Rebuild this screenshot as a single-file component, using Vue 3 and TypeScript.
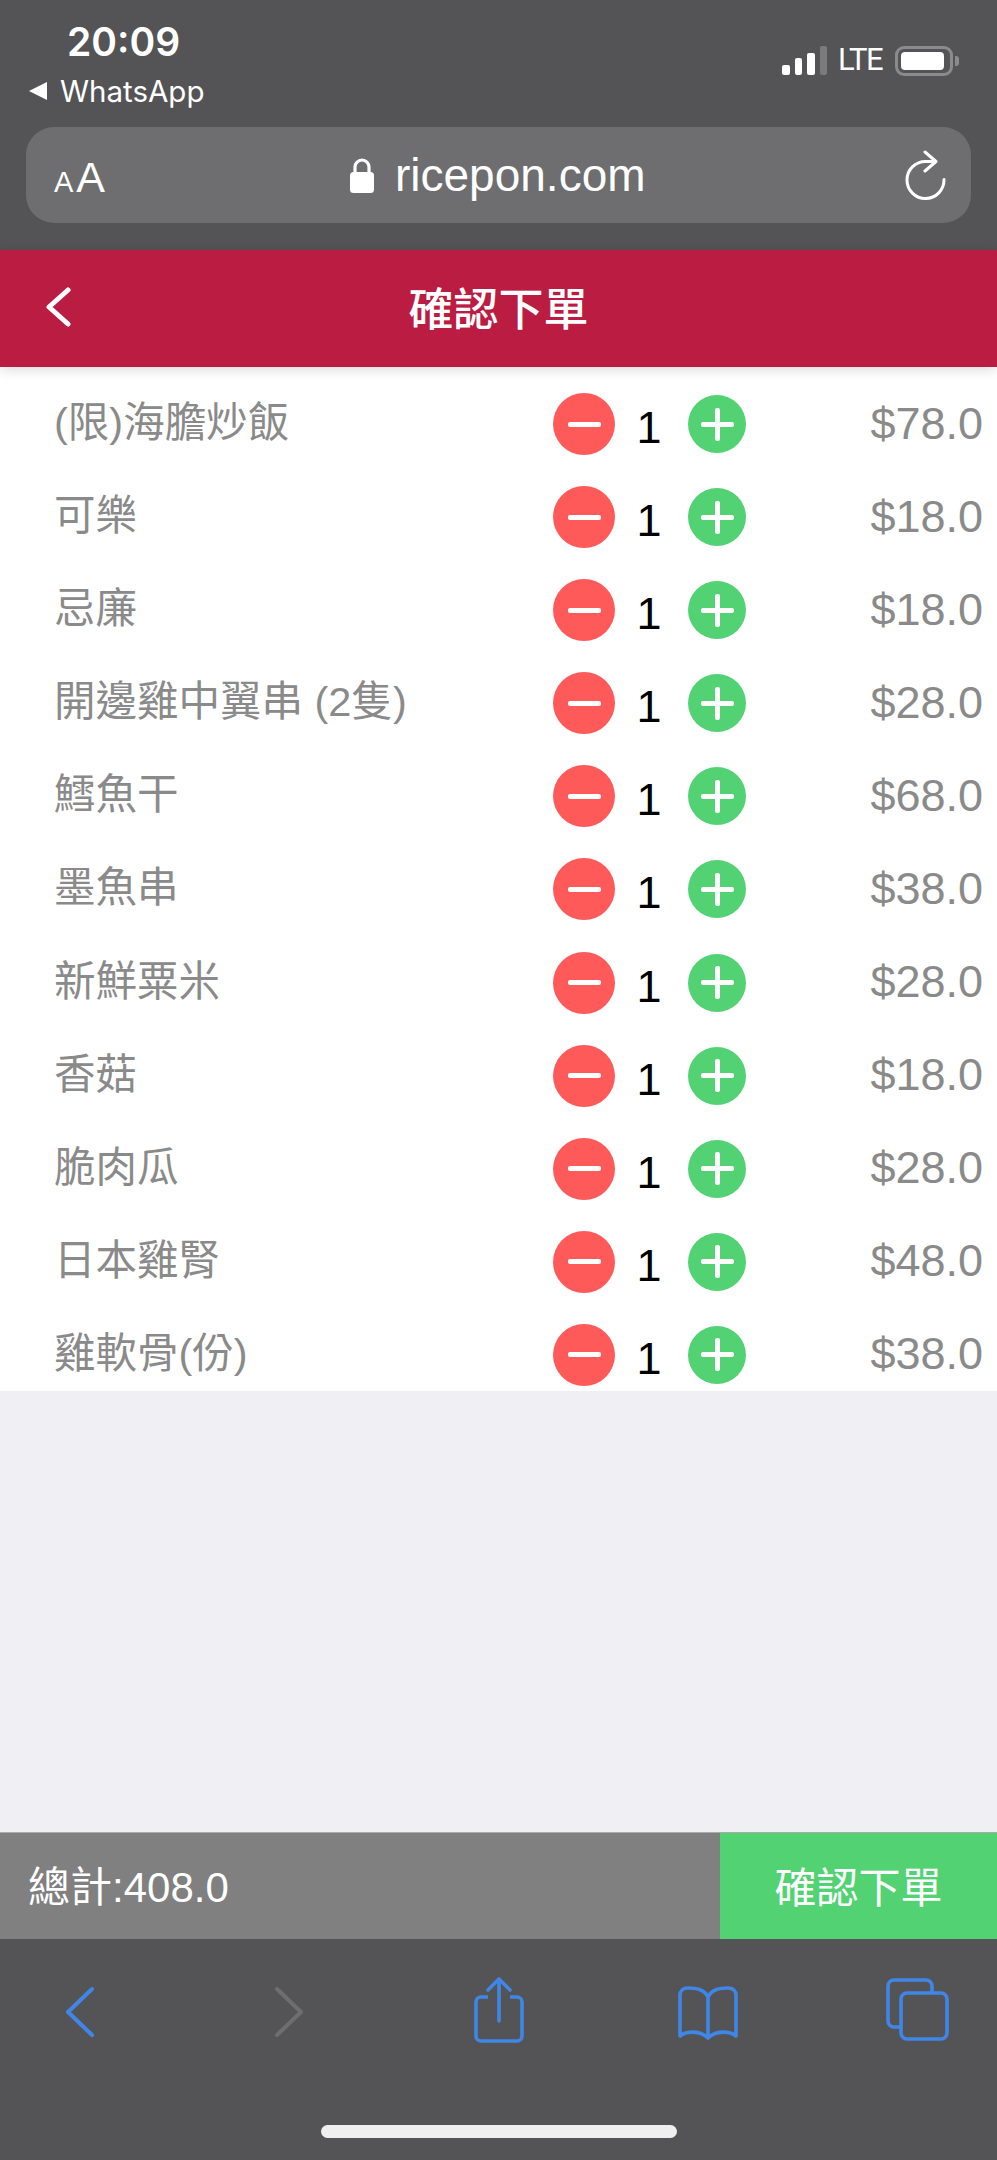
<script setup lang="ts">
import { computed, ref } from 'vue'

const items = ref([
  { name: '(限)海膽炒飯', price: 78, qty: 1 },
  { name: '可樂', price: 18, qty: 1 },
  { name: '忌廉', price: 18, qty: 1 },
  { name: '開邊雞中翼串 (2隻)', price: 28, qty: 1 },
  { name: '鱈魚干', price: 68, qty: 1 },
  { name: '墨魚串', price: 38, qty: 1 },
  { name: '新鮮粟米', price: 28, qty: 1 },
  { name: '香菇', price: 18, qty: 1 },
  { name: '脆肉瓜', price: 28, qty: 1 },
  { name: '日本雞腎', price: 48, qty: 1 },
  { name: '雞軟骨(份)', price: 38, qty: 1 },
])

const total = computed(() => items.value.reduce((sum, i) => sum + i.price * i.qty, 0).toFixed(1))
</script>

<template>
  <div class="page">
    <div class="browser-top">
      <div class="status">
        <div class="status-left">
          <div class="time">20:09</div>
          <div class="back-app"><span class="tri"></span>WhatsApp</div>
        </div>
        <div class="status-right">
          <div class="signal">
            <i class="b1"></i><i class="b2"></i><i class="b3"></i><i class="b4"></i>
          </div>
          <span class="lte">LTE</span>
          <div class="battery"><div class="charge"></div></div>
          <div class="nub"></div>
        </div>
      </div>
      <div class="address">
        <div class="aa"><span class="small-a">A</span><span>A</span></div>
        <div class="url">
          <svg class="lock" width="24" height="36" viewBox="0 0 24 36">
            <path d="M5 17V10a7 7 0 0 1 14 0v7" fill="none" stroke="#fff" stroke-width="3.2" />
            <rect x="0" y="15" width="24" height="21" rx="3.5" fill="#fff" />
          </svg>
          <span>ricepon.com</span>
        </div>
        <svg class="reload" width="42" height="50" viewBox="0 0 42 50">
          <path d="M39 29.5A18.5 18.5 0 1 1 21 11.5H29" fill="none" stroke="#fff" stroke-width="3" stroke-linecap="round" />
          <path d="M20 2L31 11.5L20 21" fill="none" stroke="#fff" stroke-width="3" stroke-linecap="round" stroke-linejoin="round" />
        </svg>
      </div>
    </div>

    <div class="header">
      <svg class="header-back" width="26" height="40" viewBox="0 0 26 40">
        <path d="M23 3L4 20L23 37" fill="none" stroke="#fff" stroke-width="5" stroke-linecap="round" stroke-linejoin="round" />
      </svg>
      <h1>確認下單</h1>
    </div>

    <div class="list">
      <div v-for="item in items" :key="item.name" class="row">
        <div class="name">{{ item.name }}</div>
        <div class="stepper">
          <button class="minus" type="button"><i></i></button>
          <span class="qty">{{ item.qty }}</span>
          <button class="plus" type="button"><i></i><i class="v"></i></button>
        </div>
        <div class="price">${{ item.price.toFixed(1) }}</div>
      </div>
    </div>

    <div class="spacer"></div>

    <div class="footer">
      <div class="total">總計:{{ total }}</div>
      <div class="confirm">確認下單</div>
    </div>

    <div class="toolbar">
      <div class="tools">
        <div class="tool">
          <svg width="30" height="52" viewBox="0 0 30 52">
            <path d="M27 3L3 26L27 49" fill="none" stroke="#3f86e6" stroke-width="4" stroke-linecap="round" stroke-linejoin="round" />
          </svg>
        </div>
        <div class="tool">
          <svg width="30" height="52" viewBox="0 0 30 52">
            <path d="M3 3L27 26L3 49" fill="none" stroke="#6e6e70" stroke-width="4" stroke-linecap="round" stroke-linejoin="round" />
          </svg>
        </div>
        <div class="tool">
          <svg width="52" height="66" viewBox="0 0 52 66">
            <path d="M15 20H8a5 5 0 0 0-5 5V59a5 5 0 0 0 5 5H44a5 5 0 0 0 5-5V25a5 5 0 0 0-5-5H37" fill="none" stroke="#3f86e6" stroke-width="3.6" />
            <path d="M26 3V44M15 13L26 2L37 13" fill="none" stroke="#3f86e6" stroke-width="3.6" stroke-linecap="round" stroke-linejoin="round" />
          </svg>
        </div>
        <div class="tool">
          <svg width="60" height="54" viewBox="0 0 60 54">
            <path d="M30 11C26 3 18 2 10 2C5 2 2 5 2 9V50C8 45 22 44 30 52C38 44 52 45 58 50V9C58 5 55 2 50 2C42 2 34 3 30 11V52" fill="none" stroke="#3f86e6" stroke-width="3.6" stroke-linejoin="round" />
          </svg>
        </div>
        <div class="tool">
          <svg width="64" height="64" viewBox="0 0 64 64">
            <path d="M16 50H9a6 6 0 0 1-6-6V9a6 6 0 0 1 6-6H41a6 6 0 0 1 6 6V16" fill="none" stroke="#3f86e6" stroke-width="3.6" />
            <rect x="16" y="16" width="46" height="46" rx="6" fill="none" stroke="#3f86e6" stroke-width="3.6" />
          </svg>
        </div>
      </div>
      <div class="home-bar"></div>
    </div>
  </div>
</template>

<style scoped>
.page { width:997px; height:2160px; display:flex; flex-direction:column; background:#efeff4; font-family:"Liberation Sans","Noto Sans CJK TC",sans-serif; overflow:hidden; }

.browser-top { height:250px; box-sizing:border-box; background:#545456; color:#fff; padding:0 26px; }
.status { height:127px; display:flex; justify-content:space-between; }
.status-left { padding-top:20px; }
.time { margin-left:41px; font-family:Inter,sans-serif; font-size:39px; line-height:44px; font-weight:600; }
.back-app { display:flex; align-items:center; font-family:Inter,sans-serif; font-size:29.5px; line-height:36px; margin-top:9px; margin-left:3px; }
.tri { width:0; height:0; border-style:solid; border-width:9px 18px 9px 0; border-color:transparent #fff transparent transparent; margin-right:13px; }
.status-right { display:flex; align-items:flex-start; padding-top:46px; margin-right:12px; }
.signal { display:flex; align-items:flex-end; gap:5px; height:29px; margin-right:11px; }
.signal i { display:block; width:7.5px; border-radius:2px; background:#fff; }
.signal .b1 { height:10px; }
.signal .b2 { height:17px; }
.signal .b3 { height:22px; }
.signal .b4 { height:29px; background:#7b7b7d; }
.lte { font-family:Roboto,sans-serif; font-size:31px; line-height:30px; letter-spacing:-1.5px; width:57px; margin-top:-1px; }
.battery { width:58px; height:30px; box-sizing:border-box; border:3px solid #8b8b8d; border-radius:9px; padding:3px; }
.charge { width:43px; height:100%; background:#fff; border-radius:4px; }
.nub { width:4px; height:10px; margin:10px 0 0 2px; background:#8b8b8d; border-radius:0 3px 3px 0; }

.address { height:96px; display:flex; align-items:center; justify-content:space-between; background:#6e6e70; border-radius:28px; padding:0 24px 0 28px; position:relative; }
.aa { font-size:43px; line-height:43px; margin-top:10px; white-space:nowrap; }
.small-a { font-size:29px; margin-right:3px; }
.url { position:absolute; left:324px; display:flex; align-items:center; gap:21px; font-size:46px; }
.lock { display:block; }

.header { height:117px; flex:none; background:#bb1c42; display:flex; align-items:center; justify-content:center; position:relative; z-index:1; box-shadow:0 2px 12px rgba(0,0,0,.16); }
.header-back { position:absolute; left:45px; top:37px; }
.header h1 { margin:0 0 5px; color:#fff; font-size:45px; font-weight:500; }

.list { background:#fff; padding:26px 14px 5px 54px; display:flex; flex-direction:column; gap:31.1px; }
.row { height:62px; display:flex; align-items:center; }
.name { width:499px; color:#8a8a8a; font-size:41.5px; line-height:62px; margin-bottom:2px; white-space:nowrap; }
.stepper { display:flex; align-items:center; }
.stepper button { display:block; border:0; padding:0; border-radius:50%; position:relative; }
.minus { width:62px; height:62px; background:#ff5a5a; }
.plus { width:58px; height:58px; background:#52d273; }
.stepper i { position:absolute; left:50%; top:50%; width:33px; height:5px; margin:-2.5px 0 0 -16.5px; background:#fff; border-radius:2px; }
.stepper i.v { width:5px; height:33px; margin:-16.5px 0 0 -2.5px; }
.qty { width:73px; box-sizing:border-box; padding:8px 5px 0 0; text-align:center; color:#000; font-size:45px; line-height:62px; }
.price { margin-left:auto; color:#8a8a8a; font-size:45px; line-height:62px; margin-bottom:1px; }

.spacer { flex:1; }

.footer { height:107px; flex:none; display:flex; border-top:1px solid #aaa; box-sizing:border-box; color:#fff; font-size:42px; }
.total { flex:1; background:#808080; display:flex; align-items:center; padding:0 0 5px 28px; }
.confirm { width:277px; background:#52d273; display:flex; align-items:center; justify-content:center; padding-bottom:4px; }

.toolbar { height:221px; flex:none; background:#545456; display:flex; flex-direction:column; align-items:center; }
.tools { width:100%; box-sizing:border-box; height:186px; display:flex; justify-content:space-between; align-items:flex-start; padding:38px 48px 0; }
.tool { width:64px; display:flex; justify-content:center; }
.tool svg { display:block; margin-top:9px; }
.tool:nth-child(3) svg, .tool:nth-child(5) svg { margin-top:0; }
.home-bar { width:356px; height:13px; background:#efefef; border-radius:7px; }
</style>

<style>
body { margin:0; }
</style>
